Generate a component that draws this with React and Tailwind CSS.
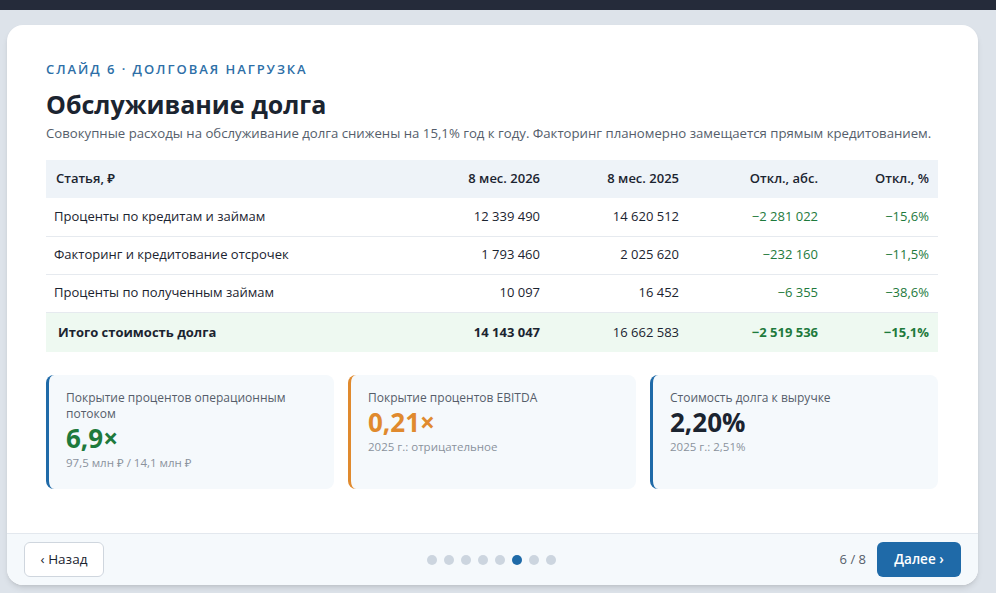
import React from "react";

const rows = [
  { name: "Проценты по кредитам и займам", a: "12 339 490", b: "14 620 512", d: "−2 281 022", p: "−15,6%" },
  { name: "Факторинг и кредитование отсрочек", a: "1 793 460", b: "2 025 620", d: "−232 160", p: "−11,5%" },
  { name: "Проценты по полученным займам", a: "10 097", b: "16 452", d: "−6 355", p: "−38,6%" },
];

const cards = [
  { title: "Покрытие процентов операционным потоком", value: "6,9×", sub: "97,5 млн ₽ / 14,1 млн ₽", border: "border-[#1f6aa8]", color: "text-[#1e7a3c]" },
  { title: "Покрытие процентов EBITDA", value: "0,21×", sub: "2025 г.: отрицательное", border: "border-[#e08a2e]", color: "text-[#e08a2e]" },
  { title: "Стоимость долга к выручке", value: "2,20%", sub: "2025 г.: 2,51%", border: "border-[#1f6aa8]", color: "text-[#1b2430]" },
];

export default function App() {
  return (
    <div className="w-[996px] h-[593px] bg-[#dde3ea] overflow-hidden" style={{ fontFamily: '"Open Sans", "Noto Sans", sans-serif' }}>
      <div className="h-[10px] bg-[#252b3a]" />
      <div className="mx-[7px] mt-[15px] w-[971px] h-[560px] bg-white rounded-[16px] shadow-md flex flex-col overflow-hidden">
        <div className="flex-1 px-[39px] pt-[35px]">
          <div className="text-[13px] font-semibold tracking-[0.15em] text-[#2e6fa7] leading-[18px]">СЛАЙД 6 · ДОЛГОВАЯ НАГРУЗКА</div>
          <h1 className="mt-[10px] text-[25px] font-bold text-[#1b2430] leading-[32px]">Обслуживание долга</h1>
          <p className="mt-[4px] text-[13.2px] text-[#555e6b] leading-[18px]">Совокупные расходы на обслуживание долга снижены на 15,1% год к году. Факторинг планомерно замещается прямым кредитованием.</p>
          <table className="mt-[18px] w-[892px] text-[13px] text-[#1b2430]">
            <thead>
              <tr className="bg-[#eef3f8] h-[38px] font-semibold">
                <th className="text-left pl-[10px] font-semibold">Статья, ₽</th>
                <th className="text-right w-[140px] font-semibold">8 мес. 2026</th>
                <th className="text-right w-[139px] font-semibold">8 мес. 2025</th>
                <th className="text-right w-[139px] font-semibold">Откл., абс.</th>
                <th className="text-right w-[120px] pr-[9px] font-semibold">Откл., %</th>
              </tr>
            </thead>
            <tbody>
              {rows.map((r) => (
                <tr key={r.name} className="h-[38px] border-b border-[#e6eaef]">
                  <td className="pl-[8px]">{r.name}</td>
                  <td className="text-right">{r.a}</td>
                  <td className="text-right">{r.b}</td>
                  <td className="text-right text-[#1e7a3c]">{r.d}</td>
                  <td className="text-right pr-[9px] text-[#1e7a3c]">{r.p}</td>
                </tr>
              ))}
              <tr className="h-[40px] bg-[#eef9f1] font-bold">
                <td className="pl-[12px]">Итого стоимость долга</td>
                <td className="text-right">14 143 047</td>
                <td className="text-right font-normal">16 662 583</td>
                <td className="text-right text-[#1e7a3c]">−2 519 536</td>
                <td className="text-right pr-[9px] text-[#1e7a3c]">−15,1%</td>
              </tr>
            </tbody>
          </table>
          <div className="mt-[23px] w-[892px] grid grid-cols-3 gap-[14px]">
            {cards.map((c) => (
              <div key={c.title} className={`h-[114px] bg-[#f5f9fc] rounded-[8px] border-l-[3px] ${c.border} pl-[17px] pr-8 pt-[15px]`}>
                <div className="text-[12px] text-[#555e6b] leading-[16px]">{c.title}</div>
                <div className={`text-[26px] font-bold leading-[32px] ${c.color}`}>{c.value}</div>
                <div className="text-[11.5px] text-[#8a929c] leading-[16px] mt-[1px]">{c.sub}</div>
              </div>
            ))}
          </div>
        </div>
        <div className="h-[52px] border-t border-[#e3e8ee] bg-[#f5f9fc] flex items-center justify-between px-[17px]">
          <button className="h-[35px] w-[80px] bg-white border border-[#cfd6de] rounded-[6px] text-[13.5px] text-[#1b2430]">‹ Назад</button>
          <div className="flex gap-[7px] ml-[40px]">
            {[0, 1, 2, 3, 4, 5, 6, 7].map((i) => (
              <span key={i} className={`w-[10px] h-[10px] rounded-full ${i === 5 ? "bg-[#1f6aa8]" : "bg-[#ccd5df]"}`} />
            ))}
          </div>
          <div className="flex items-center gap-[11px]">
            <span className="text-[13px] text-[#555e6b]">6 / 8</span>
            <button className="h-[35px] w-[84px] bg-[#1f6aa8] rounded-[6px] text-[13.5px] font-semibold text-white">Далее ›</button>
          </div>
        </div>
      </div>
    </div>
  );
}
